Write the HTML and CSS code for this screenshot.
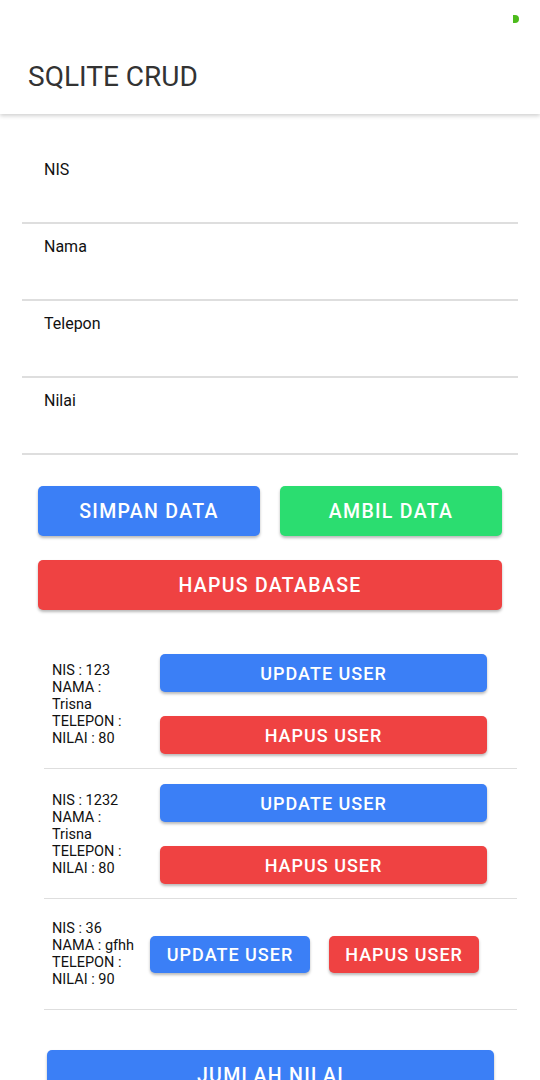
FILE: index.html
```html
<!DOCTYPE html>
<html lang="id">
<head>
<meta charset="utf-8">
<title>SQLITE CRUD</title>
<link rel="stylesheet" href="styles.css">
</head>
<body>
<div class="status-dot"></div>
<header class="appbar">
  <h1 class="title">SQLITE CRUD</h1>
</header>
<main class="content">
  <form class="form">
    <div class="field"><span class="label">NIS</span></div>
    <div class="field"><span class="label">Nama</span></div>
    <div class="field"><span class="label">Telepon</span></div>
    <div class="field"><span class="label">Nilai</span></div>
  </form>
  <div class="actions">
    <div class="action-row">
      <button class="btn btn-big blue">SIMPAN DATA</button>
      <button class="btn btn-big green">AMBIL DATA</button>
    </div>
    <button class="btn btn-big red btn-full">HAPUS DATABASE</button>
  </div>
  <ul class="list">
    <li class="item">
      <div class="info narrow">NIS : 123<br>NAMA : Trisna<br>TELEPON :<br>NILAI : 80</div>
      <div class="item-btns col">
        <button class="btn btn-small blue">UPDATE USER</button>
        <button class="btn btn-small red">HAPUS USER</button>
      </div>
    </li>
    <li class="item">
      <div class="info narrow">NIS : 1232<br>NAMA : Trisna<br>TELEPON :<br>NILAI : 80</div>
      <div class="item-btns col">
        <button class="btn btn-small blue">UPDATE USER</button>
        <button class="btn btn-small red">HAPUS USER</button>
      </div>
    </li>
    <li class="item item-row">
      <div class="info">NIS : 36<br>NAMA : gfhh<br>TELEPON :<br>NILAI : 90</div>
      <div class="item-btns row">
        <button class="btn btn-small blue w-update">UPDATE USER</button>
        <button class="btn btn-small red w-hapus">HAPUS USER</button>
      </div>
    </li>
  </ul>
  <button class="btn btn-big blue btn-total">JUMLAH NILAI</button>
</main>
</body>
</html>
```

FILE: styles.css
```css
* { box-sizing: border-box; }
html, body { margin: 0; padding: 0; background: #ffffff; }
body {
  font-family: Roboto, "Liberation Sans", Arial, sans-serif;
  color: #111;
  width: 540px;
  position: relative;
}
.status-dot {
  position: absolute;
  left: 513px;
  top: 15px;
  width: 6px;
  height: 8px;
  background: #4cbb1c;
  border-radius: 0 4px 4px 0;
  z-index: 2;
}
.appbar {
  height: 114px;
  padding: 60px 0 0 28px;
  background: #fff;
  box-shadow: 0 2px 4px rgba(0,0,0,0.18);
  position: relative;
  z-index: 1;
}
.title {
  margin: 0;
  font-size: 28px;
  font-weight: 400;
  line-height: 33px;
  color: #333;
  letter-spacing: 0;
}
.content { padding-top: 33px; }
.form { margin: 0 22px; display: flex; flex-direction: column; }
.field {
  height: 77px;
  border-bottom: 2px solid #dedede;
  padding: 13px 0 0 22px;
}
.label { font-size: 16px; line-height: 19px; color: #111; }
.actions {
  padding: 31px 38px 0 38px;
  display: flex;
  flex-direction: column;
  gap: 24px;
}
.action-row { display: flex; gap: 20px; }
.action-row .btn { flex: 1; }
.btn {
  border: none;
  color: #fff;
  font-family: Roboto, "Liberation Sans", Arial, sans-serif;
  font-weight: 500;
  border-radius: 5px;
  box-shadow: 0 2px 3px rgba(0,0,0,0.28);
  padding: 0;
  cursor: pointer;
}
.btn-big { height: 50px; font-size: 19.5px; letter-spacing: 1.3px; }
.btn-full { width: 100%; }
.blue { background: #3b7ff6; }
.green { background: #2bdd70; }
.red { background: #ef4242; }
.list {
  list-style: none;
  margin: 29px 23px 0 44px;
  padding: 0;
}
.item {
  display: flex;
  align-items: center;
  border-bottom: 1px solid #dedede;
  padding: 15px 30px 14px 8px;
}
.info {
  font-size: 14.5px;
  line-height: 17px;
  color: #111;
}
.info.narrow { width: 85px; margin-right: 23px; }
.item-btns.col { flex: 1; display: flex; flex-direction: column; gap: 24px; }
.btn-small { height: 38px; font-size: 18px; letter-spacing: 1px; }
.item-row { padding: 21px 0 21px 8px; }
.item-row .info { margin-right: 16px; }
.item-btns.row { display: flex; gap: 19px; }
.item-btns.row .btn { height: 37px; }
.w-update { width: 160px; }
.w-hapus { width: 150px; }
.btn-total {
  display: block;
  margin: 40px 0 0 47px;
  width: 447px;
}
```
